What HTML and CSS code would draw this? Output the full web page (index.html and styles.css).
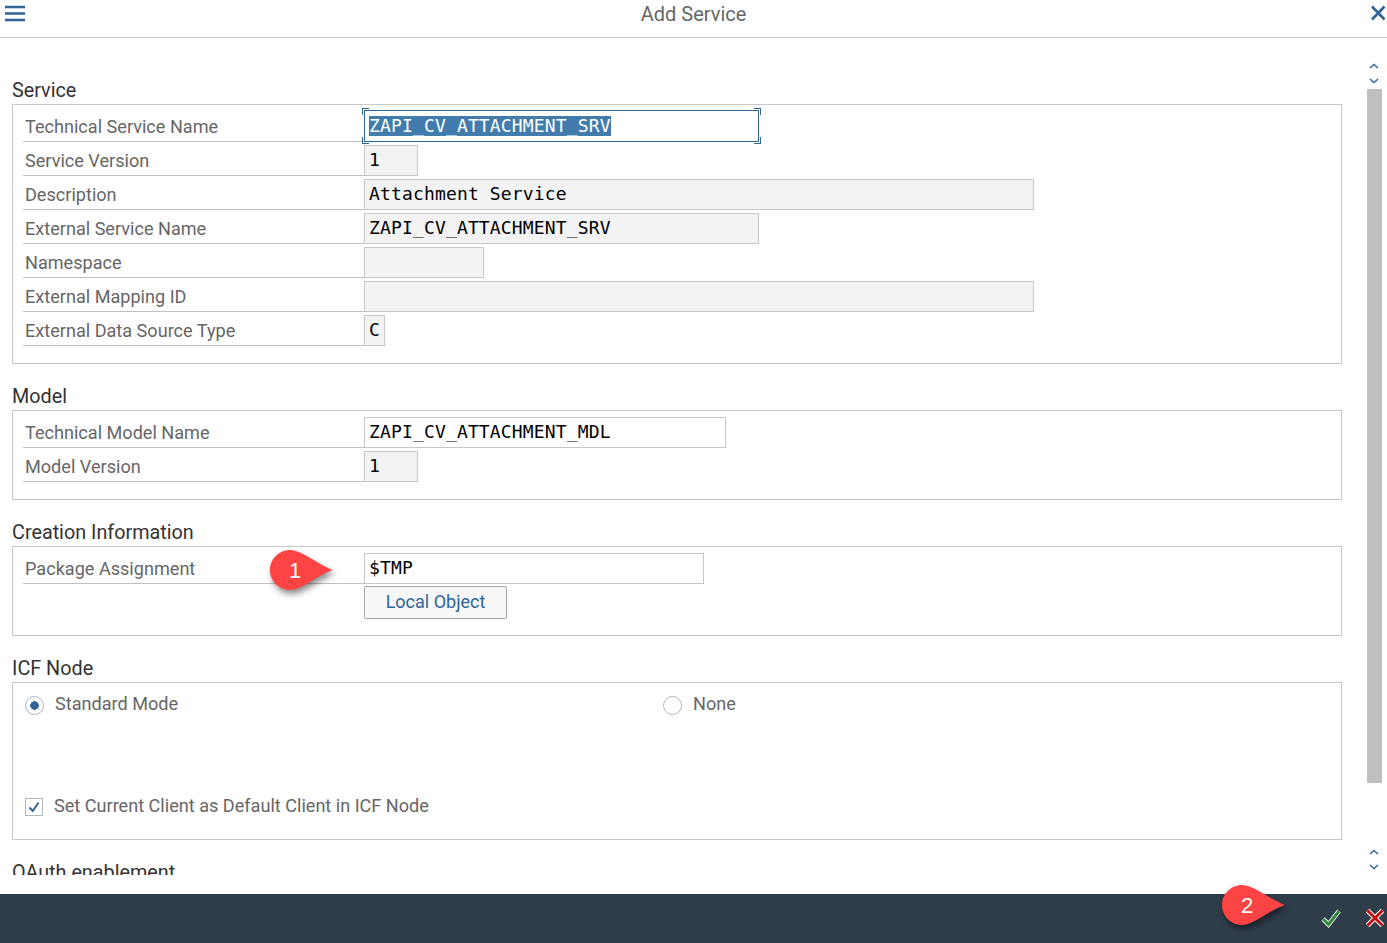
FILE: index.html
```html
<!DOCTYPE html>
<html>
<head>
    <title>Add Service</title>
    <link rel="stylesheet" href="styles.css">
</head>
<body>
    <div class="dialog">
        <header class="titlebar">
            <svg class="menu-icon" width="20" height="17" viewBox="0 0 20 17">
                <path d="M0 3h20M0 9.500h20M0 16h20" stroke="#2f6497" stroke-width="2.400" fill="none"/>
            </svg>
            <div class="title">Add Service</div>
            <svg class="close-icon" width="16" height="16" viewBox="0 0 16 16">
                <path d="M2 1.500L14.500 14.500M14.500 1.500L2 14.500" stroke="#2f6497" stroke-width="2.600" fill="none"/>
            </svg>
        </header>

        <main class="main">
            <div class="content">
                <section class="group">
                    <h2 class="group-title">Service</h2>
                    <div class="group-box">
                        <div class="row">
                            <div class="label">Technical Service Name</div>
                            <div class="field field-focus w-name">
                                <span class="selected">ZAPI_CV_ATTACHMENT_SRV</span>
                                <i class="mark mark-tl"></i><i class="mark mark-tr"></i>
                                <i class="mark mark-bl"></i><i class="mark mark-br"></i>
                            </div>
                        </div>
                        <div class="row">
                            <div class="label">Service Version</div>
                            <div class="field readonly w-version">1</div>
                        </div>
                        <div class="row">
                            <div class="label">Description</div>
                            <div class="field readonly w-long">Attachment Service</div>
                        </div>
                        <div class="row">
                            <div class="label">External Service Name</div>
                            <div class="field readonly w-name">ZAPI_CV_ATTACHMENT_SRV</div>
                        </div>
                        <div class="row">
                            <div class="label">Namespace</div>
                            <div class="field readonly w-namespace"></div>
                        </div>
                        <div class="row">
                            <div class="label">External Mapping ID</div>
                            <div class="field readonly w-long"></div>
                        </div>
                        <div class="row">
                            <div class="label">External Data Source Type</div>
                            <div class="field readonly w-char">C</div>
                        </div>
                    </div>
                </section>

                <section class="group">
                    <h2 class="group-title">Model</h2>
                    <div class="group-box">
                        <div class="row">
                            <div class="label">Technical Model Name</div>
                            <div class="field w-model">ZAPI_CV_ATTACHMENT_MDL</div>
                        </div>
                        <div class="row">
                            <div class="label">Model Version</div>
                            <div class="field readonly w-version">1</div>
                        </div>
                    </div>
                </section>

                <section class="group">
                    <h2 class="group-title">Creation Information</h2>
                    <div class="group-box">
                        <div class="row">
                            <div class="label">Package Assignment</div>
                            <div class="field w-package">$TMP</div>
                        </div>
                        <button class="btn">Local Object</button>
                    </div>
                </section>

                <section class="group">
                    <h2 class="group-title">ICF Node</h2>
                    <div class="group-box icf-box">
                        <div class="radio-row">
                            <div class="option">
                                <span class="radio radio-on"></span>
                                <span>Standard Mode</span>
                            </div>
                            <div class="option">
                                <span class="radio"></span>
                                <span>None</span>
                            </div>
                        </div>
                        <div class="check-row">
                            <span class="checkbox">
                                <svg width="14" height="14" viewBox="0 0 14 14">
                                    <path d="M2.500 7.500L5.800 11L11.500 2.500" stroke="#2f6497" stroke-width="2" fill="none"/>
                                </svg>
                            </span>
                            <span>Set Current Client as Default Client in ICF Node</span>
                        </div>
                    </div>
                </section>

                <section class="group">
                    <h2 class="group-title">OAuth enablement</h2>
                </section>
            </div>

            <div class="scroller">
                <div class="scroll-btns">
                    <svg width="10" height="6" viewBox="0 0 10 6"><path d="M1 5L5 1.500L9 5" stroke="#2f6497" stroke-width="1.400" fill="none"/></svg>
                    <svg width="10" height="6" viewBox="0 0 10 6"><path d="M1 1L5 4.500L9 1" stroke="#2f6497" stroke-width="1.400" fill="none"/></svg>
                </div>
                <div class="scroll-track"></div>
                <div class="scroll-btns">
                    <svg width="10" height="6" viewBox="0 0 10 6"><path d="M1 5L5 1.500L9 5" stroke="#2f6497" stroke-width="1.400" fill="none"/></svg>
                    <svg width="10" height="6" viewBox="0 0 10 6"><path d="M1 1L5 4.500L9 1" stroke="#2f6497" stroke-width="1.400" fill="none"/></svg>
                </div>
            </div>
        </main>

        <footer class="footer">
            <svg class="footer-icon" width="20" height="20" viewBox="0 0 20 20">
                <path d="M2 11L7.500 16.500L18 3" stroke="#fff" stroke-width="4.600" fill="none"/>
                <path d="M2 11L7.500 16.500L18 3" stroke="#2f8a3a" stroke-width="3" fill="none"/>
            </svg>
            <svg class="footer-icon" width="20" height="20" viewBox="0 0 20 20">
                <path d="M2.500 2.500L17.500 17.500M17.500 2.500L2.500 17.500" stroke="#fff" stroke-width="5" fill="none"/>
                <path d="M2.500 2.500L17.500 17.500M17.500 2.500L2.500 17.500" stroke="#c40f14" stroke-width="3" fill="none"/>
            </svg>
        </footer>

        <!-- Numbered callouts -->
        <div class="callout callout-1">
            <svg width="64" height="42" viewBox="0 0 64 42"><path class="callout-shape" d="M21 1C32 1 45 13 63.500 21C45 28 33 41 21 41C10 41 1 32 1 21C1 10 10 1 21 1Z"/></svg>
            <span class="callout-num">1</span>
        </div>
        <div class="callout callout-2">
            <svg width="64" height="42" viewBox="0 0 64 42"><path class="callout-shape" d="M21 1C32 1 45 13 63.500 21C45 28 33 41 21 41C10 41 1 32 1 21C1 10 10 1 21 1Z"/></svg>
            <span class="callout-num">2</span>
        </div>
    </div>
</body>
</html>
```

FILE: styles.css
```css
* {
    box-sizing: border-box;
}

body {
    margin: 0;
    font-family: Roboto, Arial, sans-serif;
    background-color: white;
    color: #666;
}

.dialog {
    position: relative;
    display: flex;
    flex-direction: column;
    height: 943px;
    overflow: hidden;
}

/* Title bar */
.titlebar {
    position: relative;
    height: 38px;
    flex: none;
    border-bottom: 1px solid #c4c4c4;
    padding: 4px 0 0 5px;
}

.title {
    position: absolute;
    top: 2px;
    left: 0;
    right: 0;
    text-align: center;
    font-size: 20px;
    color: #666;
}

.menu-icon {
    display: block;
    overflow: visible;
}

.close-icon {
    position: absolute;
    top: 5px;
    right: 1px;
}

/* Main area */
.main {
    flex: 1;
    display: flex;
    min-height: 0;
    padding-bottom: 19px;
}

.content {
    width: 1330px;
    margin-left: 12px;
    padding-top: 42px;
    overflow: hidden;
}

.group {
    margin-bottom: 22px;
}

.group-title {
    margin: 0;
    height: 24px;
    font-size: 19.800px;
    font-weight: normal;
    line-height: 21px;
    color: #333;
}

.group-box {
    border: 1px solid #c8c8c8;
    padding: 6px 0 16px 10px;
}

.row {
    display: flex;
    align-items: flex-end;
    height: 31px;
    margin-bottom: 3px;
}

.group-box .row:last-child {
    margin-bottom: 1px;
}

.label {
    width: 341px;
    height: 31px;
    flex: none;
    padding-left: 2px;
    border-bottom: 1px solid #c0c0c0;
    font-size: 18.100px;
    line-height: 32px;
    color: #666;
}

.field {
    position: relative;
    height: 31px;
    padding-left: 4px;
    border: 1px solid #c8c8c8;
    background-color: white;
    font-family: "DejaVu Sans Mono", monospace;
    font-size: 18px;
    line-height: 27px;
    letter-spacing: 0.150px;
    color: #000;
}

.readonly {
    background-color: #f3f3f3;
}

.w-name { width: 395px; }
.w-version { width: 54px; }
.w-long { width: 670px; }
.w-namespace { width: 120px; }
.w-char { width: 21px; }
.w-model { width: 362px; }
.w-package { width: 340px; }

/* Focused field */
.field-focus {
    border-color: #2f6497;
    height: 32px;
    line-height: 27px;
}

.selected {
    display: inline-block;
    height: 20px;
    line-height: 19px;
    vertical-align: middle;
    background-color: #427cac;
    color: white;
}

.mark {
    position: absolute;
    width: 7px;
    height: 7px;
    border: 0 solid #2f6497;
}

.mark-tl { top: -3px; left: -3px; border-width: 1px 0 0 1px; }
.mark-tr { top: -3px; right: -3px; border-width: 1px 1px 0 0; }
.mark-bl { bottom: -3px; left: -3px; border-width: 0 0 1px 1px; }
.mark-br { bottom: -3px; right: -3px; border-width: 0 1px 1px 0; }

.btn {
    display: block;
    width: 143px;
    height: 33px;
    margin: -1px 0 0 341px;
    padding: 0 0 2px;
    border: 1px solid #a8a8a8;
    border-radius: 2px;
    background-color: #f7f7f7;
    font-family: inherit;
    font-size: 18px;
    color: #2f6497;
}

/* ICF node */
.icf-box {
    height: 158px;
    padding: 10px 0 0 12px;
}

.radio-row {
    display: flex;
    height: 101px;
}

.option {
    display: flex;
    align-items: flex-start;
    gap: 11px;
    width: 638px;
    font-size: 18.100px;
    line-height: 22px;
}

.radio {
    width: 19px;
    height: 19px;
    margin-top: 3px;
    border: 1px solid #a9b7c6;
    border-radius: 50%;
    background-color: white;
}

.radio-on {
    background: radial-gradient(circle, #2f6497 0 4px, white 4.500px);
}

.check-row {
    display: flex;
    align-items: center;
    gap: 11px;
    font-size: 18.100px;
    line-height: 24px;
}

.checkbox {
    display: flex;
    align-items: center;
    justify-content: center;
    width: 18px;
    height: 18px;
    margin-top: 2px;
    border: 1px solid #b0b8c0;
    background-color: white;
}

/* Scrollbar */
.scroller {
    width: 15px;
    margin-left: 25px;
    padding-top: 25px;
    display: flex;
    flex-direction: column;
    align-items: center;
}

.scroll-btns {
    display: flex;
    flex-direction: column;
    gap: 9px;
    height: 26px;
    padding-right: 1px;
}

.scroll-btns svg {
    display: block;
}

.scroll-track {
    width: 15px;
    height: 694px;
    margin-bottom: 66px;
    background-color: #bfbfbf;
}

/* Footer */
.footer {
    flex: none;
    height: 49px;
    display: flex;
    justify-content: flex-end;
    align-items: center;
    gap: 24px;
    padding: 0 2px 2px 0;
    background-color: #2f3c4a;
}

/* Callouts */
.callout {
    position: absolute;
    width: 64px;
    height: 42px;
}

.callout-1 { top: 549px; left: 269px; }
.callout-2 { top: 884px; left: 1221px; }

.callout svg {
    display: block;
    overflow: visible;
}

.callout-shape {
    fill: #fd4343;
    filter: drop-shadow(2px 4px 3px rgba(0, 0, 0, 0.45));
}

.callout-num {
    position: absolute;
    top: 7px;
    left: 0;
    width: 52px;
    text-align: center;
    font-family: "Liberation Sans", Arial, sans-serif;
    font-size: 22px;
    line-height: 30px;
    color: white;
}
```
